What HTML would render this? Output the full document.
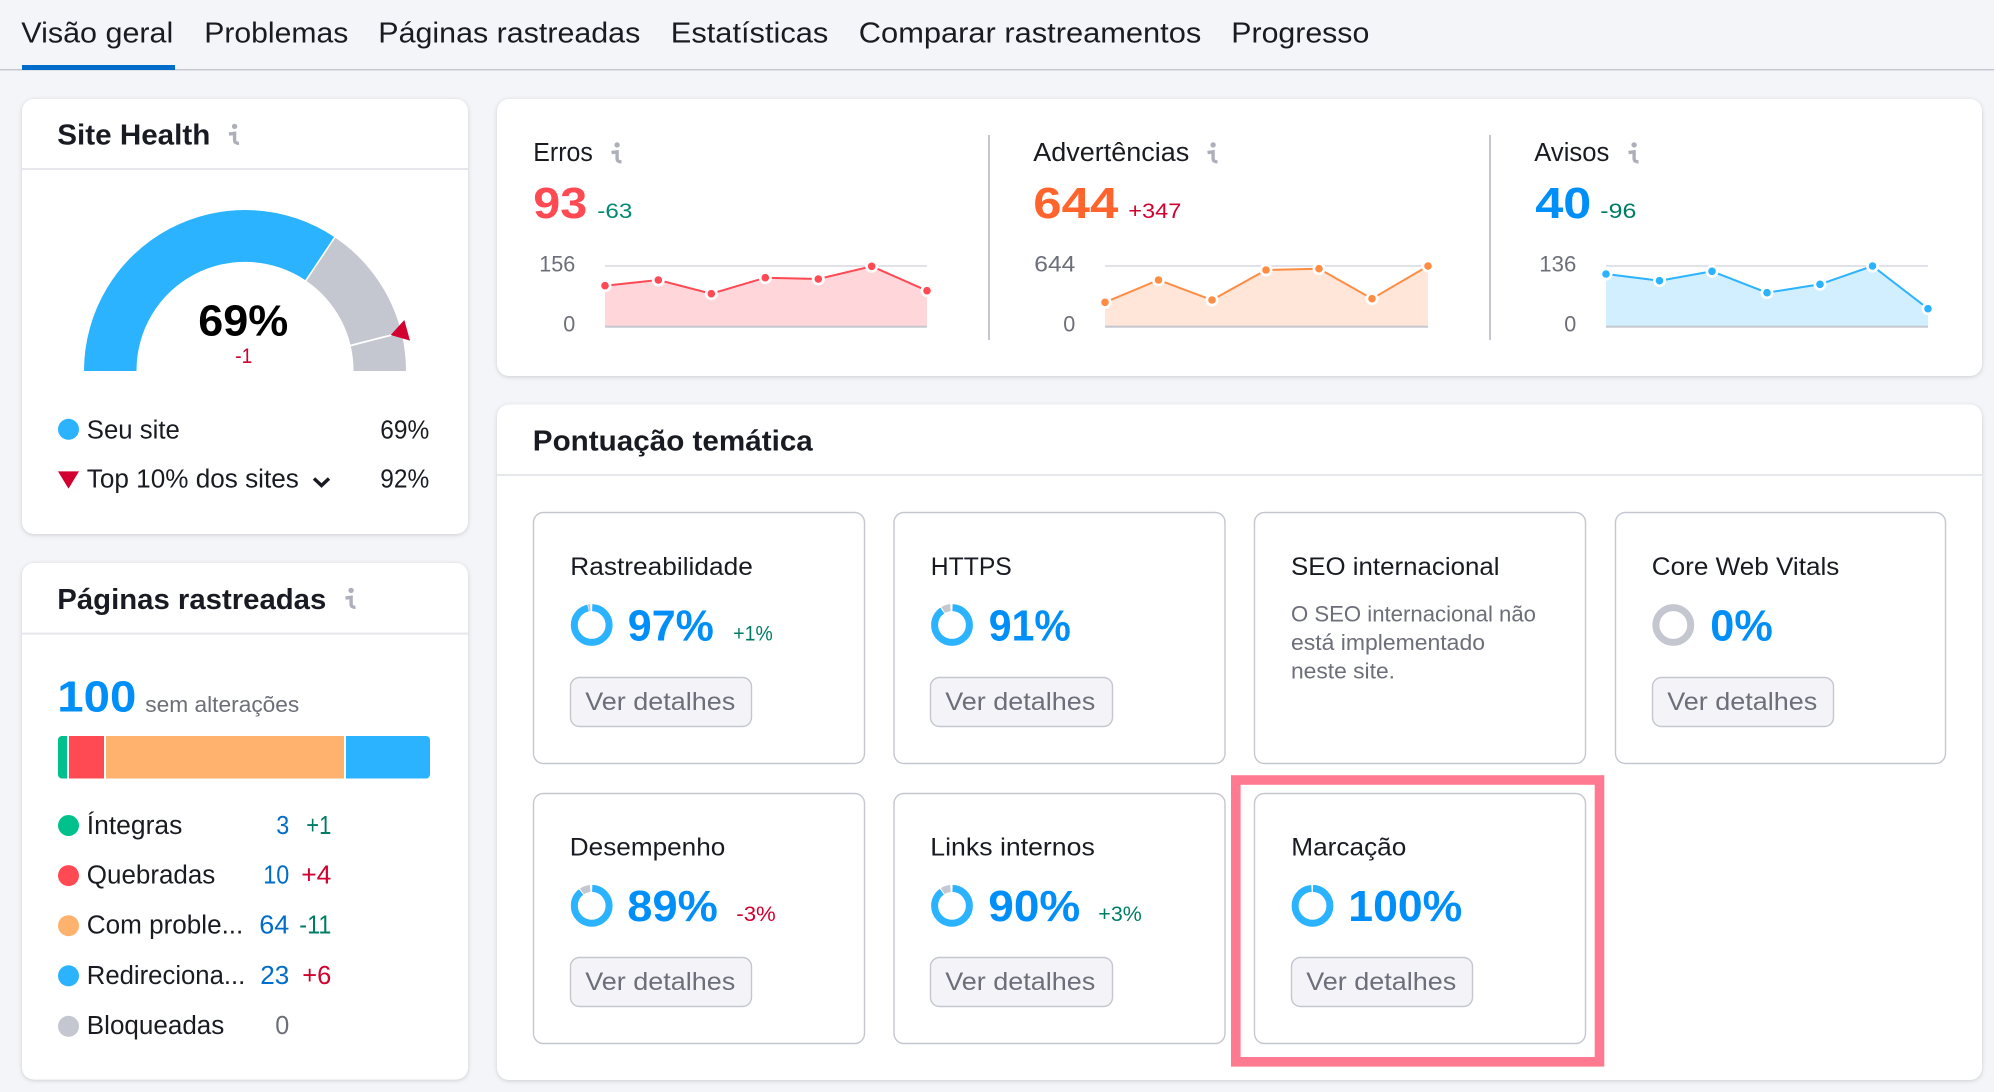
<!DOCTYPE html>
<html lang="pt">
<head>
<meta charset="utf-8">
<title>Visão geral</title>
<style>
html,body{margin:0;padding:0;background:#f4f5f9;width:1994px;height:1092px;overflow:hidden}
svg{display:block;position:absolute;left:0;top:0}
text{font-family:"Liberation Sans",sans-serif;fill:#191b23;white-space:pre;transform:translateX(-.7px)}
.tab{font-size:28.5px}
.h{font-size:29px;font-weight:700}
.b{font-size:25.5px}
.t{font-size:25px}
.g{font-size:22.5px;fill:#6c6e79}
.d{font-size:21.5px}
.big{font-size:44px;font-weight:700}
.bl{fill:#008ff8}
.up{fill:#d1002f}
.dn{fill:#007c65}
.nm{font-size:25.5px;fill:#006dca}
.btn{font-size:25px;fill:#6c6e79}
.card{fill:#fff;filter:drop-shadow(0 1px 2px rgba(25,27,35,.18))}
.in{fill:#fff;stroke:#c4c7cf;stroke-width:1.4}
.bt{fill:#f4f4f8;stroke:#c4c7cf;stroke-width:1.4}
.ln{fill:#e6e7ed}
.ic circle{fill:#adb0bb}
.ic path{fill:none;stroke:#adb0bb;stroke-width:3.4}
</style>
</head>
<body>
<svg width="1994" height="1092" viewBox="0 0 1994 1092" xmlns="http://www.w3.org/2000/svg">
<!-- tabs -->
<rect x="0" y="69" width="1994" height="1.4" fill="#c4c7cf"/>
<rect x="22" y="65" width="153" height="5" fill="#006dca"/>
<text class="tab" x="22" y="42.5" lengthAdjust="spacingAndGlyphs" textLength="152">Visão geral</text>
<text class="tab" x="205" y="42.5" lengthAdjust="spacingAndGlyphs" textLength="144">Problemas</text>
<text class="tab" x="379" y="42.5" lengthAdjust="spacingAndGlyphs" textLength="262">Páginas rastreadas</text>
<text class="tab" x="671.5" y="42.5" lengthAdjust="spacingAndGlyphs" textLength="157.5">Estatísticas</text>
<text class="tab" x="859.5" y="42.5" lengthAdjust="spacingAndGlyphs" textLength="342.5">Comparar rastreamentos</text>
<text class="tab" x="1232" y="42.5" lengthAdjust="spacingAndGlyphs" textLength="138">Progresso</text>

<!-- Site Health card -->
<rect class="card" x="22" y="99" width="446" height="435" rx="12"/>
<rect class="ln" x="22" y="168" width="446" height="2"/>
<text class="h" x="58" y="144.5" lengthAdjust="spacingAndGlyphs" textLength="153">Site Health</text>
<g class="ic" transform="translate(228 123.5)"><circle cx="6.6" cy="2.9" r="2.7"/><path d="M1 10.6L6.6 9.8V16.5Q6.6 20 11 19.8"/></g>
<path d="M84 371A161 161 0 0 1 335 237.5L306 280.6A108.5 108.5 0 0 0 136.5 371Z" fill="#2bb3ff"/>
<path d="M335 237.5A161 161 0 0 1 406 371H353.5A108.5 108.5 0 0 0 306 280.6Z" fill="#c4c7cf"/>
<path d="M335 237L305.6 281" stroke="#fff" stroke-width="1.6"/>
<path d="M350.7 345.5L391.7 335" stroke="#fff" stroke-width="1.8"/>
<path d="M390.7 335L404.3 320L410 340.6Z" fill="#d1002f"/>
<text x="199" y="335.5" font-size="44" font-weight="700" style="fill:#000" lengthAdjust="spacingAndGlyphs" textLength="90">69%</text>
<text class="d up" x="236" y="363" lengthAdjust="spacingAndGlyphs" textLength="17">-1</text>
<circle cx="68.5" cy="429.3" r="10.5" fill="#2bb3ff"/>
<text class="b" x="87.5" y="438.4" lengthAdjust="spacingAndGlyphs" textLength="93">Seu site</text>
<text class="b" x="381" y="438.4" lengthAdjust="spacingAndGlyphs" textLength="49">69%</text>
<path d="M58 471.4H79L68.5 488.6Z" fill="#d1002f"/>
<text class="b" x="87.5" y="487.5" lengthAdjust="spacingAndGlyphs" textLength="212">Top 10% dos sites</text>
<path d="M314 478.5L321.5 485.5L329 478.5" fill="none" stroke="#191b23" stroke-width="3.4"/>
<text class="b" x="381" y="487.5" lengthAdjust="spacingAndGlyphs" textLength="49">92%</text>

<!-- Páginas rastreadas card -->
<rect class="card" x="22" y="563" width="446" height="516.6" rx="12"/>
<rect class="ln" x="22" y="632.6" width="446" height="2"/>
<text class="h" x="58" y="609" lengthAdjust="spacingAndGlyphs" textLength="269">Páginas rastreadas</text>
<g class="ic" transform="translate(344.5 587.5)"><circle cx="6.6" cy="2.9" r="2.7"/><path d="M1 10.6L6.6 9.8V16.5Q6.6 20 11 19.8"/></g>
<text class="big bl" x="58" y="711.3" lengthAdjust="spacingAndGlyphs" textLength="79">100</text>
<text class="g" x="146" y="712" lengthAdjust="spacingAndGlyphs" textLength="154">sem alterações</text>
<path d="M62 736H67V778.5H62A4 4 0 0 1 58 774.5V740A4 4 0 0 1 62 736Z" fill="#00c08b"/>
<rect x="69" y="736" width="35" height="42.5" fill="#ff4953"/>
<rect x="106" y="736" width="238" height="42.5" fill="#ffb26e"/>
<path d="M346 736H426A4 4 0 0 1 430 740V774.5A4 4 0 0 1 426 778.5H346Z" fill="#2bb3ff"/>

<circle cx="68.5" cy="825.5" r="10.5" fill="#00c08b"/>
<text class="b" x="87.5" y="834" lengthAdjust="spacingAndGlyphs" textLength="95.5">Íntegras</text>
<text class="nm" x="277" y="834" lengthAdjust="spacingAndGlyphs" textLength="13">3</text>
<text class="b dn" x="307" y="834" lengthAdjust="spacingAndGlyphs" textLength="25">+1</text>
<circle cx="68.5" cy="875.6" r="10.5" fill="#ff4953"/>
<text class="b" x="87.5" y="883.6" lengthAdjust="spacingAndGlyphs" textLength="128.5">Quebradas</text>
<text class="nm" x="264" y="883.6" lengthAdjust="spacingAndGlyphs" textLength="26">10</text>
<text class="b up" x="302" y="883.6" lengthAdjust="spacingAndGlyphs" textLength="30">+4</text>
<circle cx="68.5" cy="925.7" r="10.5" fill="#ffb26e"/>
<text class="b" x="87.5" y="933.7" lengthAdjust="spacingAndGlyphs" textLength="156.5">Com proble...</text>
<text class="nm" x="260" y="933.7" lengthAdjust="spacingAndGlyphs" textLength="30">64</text>
<text class="b dn" x="300" y="933.7" lengthAdjust="spacingAndGlyphs" textLength="32">-11</text>
<circle cx="68.5" cy="975.8" r="10.5" fill="#2bb3ff"/>
<text class="b" x="87.5" y="983.8" lengthAdjust="spacingAndGlyphs" textLength="158.5">Redireciona...</text>
<text class="nm" x="261" y="983.8" lengthAdjust="spacingAndGlyphs" textLength="29">23</text>
<text class="b up" x="303" y="983.8" lengthAdjust="spacingAndGlyphs" textLength="29">+6</text>
<circle cx="68.5" cy="1026.3" r="10.5" fill="#c4c7cf"/>
<text class="b" x="87.5" y="1034" lengthAdjust="spacingAndGlyphs" textLength="137.5">Bloqueadas</text>
<text class="b" x="276" y="1034" style="fill:#6c6e79" lengthAdjust="spacingAndGlyphs" textLength="14">0</text>

<!-- Top stats card -->
<rect class="card" x="497" y="99" width="1485" height="277" rx="12"/>
<rect x="988" y="135" width="2" height="205" fill="#c4c7cf"/>
<rect x="1489" y="135" width="2" height="205" fill="#c4c7cf"/>

<text class="b" x="534" y="161" lengthAdjust="spacingAndGlyphs" textLength="59.5">Erros</text>
<g class="ic" transform="translate(610.5 142)"><circle cx="6.6" cy="2.9" r="2.7"/><path d="M1 10.6L6.6 9.8V16.5Q6.6 20 11 19.8"/></g>
<text class="big" x="534" y="218" style="fill:#ff4953" lengthAdjust="spacingAndGlyphs" textLength="54">93</text>
<text class="d" x="598" y="218" style="fill:#008a72" lengthAdjust="spacingAndGlyphs" textLength="35">-63</text>
<text class="g" x="540" y="271.7" lengthAdjust="spacingAndGlyphs" textLength="36">156</text>
<text class="g" x="564" y="331.6" lengthAdjust="spacingAndGlyphs" textLength="12">0</text>
<rect x="605" y="265" width="322" height="2" fill="#e0e1e9"/>
<path d="M605 285.7L658.3 280L711.3 293.7L765.3 277.7L818.3 279L871.7 266.3L927 290.7V326.7H605Z" fill="#ffd7da"/>
<rect x="605" y="325.7" width="322" height="2" fill="#c4c7cf"/>
<path d="M605 285.7L658.3 280L711.3 293.7L765.3 277.7L818.3 279L871.7 266.3L927 290.7" fill="none" stroke="#ff4953" stroke-width="2"/>
<g fill="#fff"><circle cx="605" cy="285.7" r="6.5"/><circle cx="658.3" cy="280" r="6.5"/><circle cx="711.3" cy="293.7" r="6.5"/><circle cx="765.3" cy="277.7" r="6.5"/><circle cx="818.3" cy="279" r="6.5"/><circle cx="871.7" cy="266.3" r="6.5"/><circle cx="927" cy="290.7" r="6.5"/></g>
<g fill="#ff4953"><circle cx="605" cy="285.7" r="3.8"/><circle cx="658.3" cy="280" r="3.8"/><circle cx="711.3" cy="293.7" r="3.8"/><circle cx="765.3" cy="277.7" r="3.8"/><circle cx="818.3" cy="279" r="3.8"/><circle cx="871.7" cy="266.3" r="3.8"/><circle cx="927" cy="290.7" r="3.8"/></g>

<text class="b" x="1034" y="161" lengthAdjust="spacingAndGlyphs" textLength="156">Advertências</text>
<g class="ic" transform="translate(1206.5 142)"><circle cx="6.6" cy="2.9" r="2.7"/><path d="M1 10.6L6.6 9.8V16.5Q6.6 20 11 19.8"/></g>
<text class="big" x="1034" y="218" style="fill:#ff642d" lengthAdjust="spacingAndGlyphs" textLength="85">644</text>
<text class="d up" x="1129" y="218" lengthAdjust="spacingAndGlyphs" textLength="53">+347</text>
<text class="g" x="1035" y="271.7" lengthAdjust="spacingAndGlyphs" textLength="41">644</text>
<text class="g" x="1064" y="331.6" lengthAdjust="spacingAndGlyphs" textLength="12">0</text>
<rect x="1105" y="265" width="323" height="2" fill="#e0e1e9"/>
<path d="M1105 302.3L1158.5 280L1212 300L1266 270L1319 268.7L1372 298.7L1428 266V326.7H1105Z" fill="#ffe6d8"/>
<rect x="1105" y="325.7" width="323" height="2" fill="#c4c7cf"/>
<path d="M1105 302.3L1158.5 280L1212 300L1266 270L1319 268.7L1372 298.7L1428 266" fill="none" stroke="#ff8c43" stroke-width="2"/>
<g fill="#fff"><circle cx="1105" cy="302.3" r="6.5"/><circle cx="1158.5" cy="280" r="6.5"/><circle cx="1212" cy="300" r="6.5"/><circle cx="1266" cy="270" r="6.5"/><circle cx="1319" cy="268.7" r="6.5"/><circle cx="1372" cy="298.7" r="6.5"/><circle cx="1428" cy="266" r="6.5"/></g>
<g fill="#ff8c43"><circle cx="1105" cy="302.3" r="3.8"/><circle cx="1158.5" cy="280" r="3.8"/><circle cx="1212" cy="300" r="3.8"/><circle cx="1266" cy="270" r="3.8"/><circle cx="1319" cy="268.7" r="3.8"/><circle cx="1372" cy="298.7" r="3.8"/><circle cx="1428" cy="266" r="3.8"/></g>

<text class="b" x="1535" y="161" lengthAdjust="spacingAndGlyphs" textLength="75">Avisos</text>
<g class="ic" transform="translate(1627.5 142)"><circle cx="6.6" cy="2.9" r="2.7"/><path d="M1 10.6L6.6 9.8V16.5Q6.6 20 11 19.8"/></g>
<text class="big bl" x="1536" y="218" lengthAdjust="spacingAndGlyphs" textLength="56">40</text>
<text class="d dn" x="1601" y="218" lengthAdjust="spacingAndGlyphs" textLength="36">-96</text>
<text class="g" x="1540" y="271.7" lengthAdjust="spacingAndGlyphs" textLength="37">136</text>
<text class="g" x="1565" y="331.6" lengthAdjust="spacingAndGlyphs" textLength="12">0</text>
<rect x="1606" y="265" width="322" height="2" fill="#e0e1e9"/>
<path d="M1606 274L1659.5 280.7L1712 271.3L1767 292.7L1820 284.3L1872.5 266L1928 308.7V326.7H1606Z" fill="#d2efff"/>
<rect x="1606" y="325.7" width="322" height="2" fill="#c4c7cf"/>
<path d="M1606 274L1659.5 280.7L1712 271.3L1767 292.7L1820 284.3L1872.5 266L1928 308.7" fill="none" stroke="#2bb3ff" stroke-width="2"/>
<g fill="#fff"><circle cx="1606" cy="274" r="6.5"/><circle cx="1659.5" cy="280.7" r="6.5"/><circle cx="1712" cy="271.3" r="6.5"/><circle cx="1767" cy="292.7" r="6.5"/><circle cx="1820" cy="284.3" r="6.5"/><circle cx="1872.5" cy="266" r="6.5"/><circle cx="1928" cy="308.7" r="6.5"/></g>
<g fill="#2bb3ff"><circle cx="1606" cy="274" r="3.8"/><circle cx="1659.5" cy="280.7" r="3.8"/><circle cx="1712" cy="271.3" r="3.8"/><circle cx="1767" cy="292.7" r="3.8"/><circle cx="1820" cy="284.3" r="3.8"/><circle cx="1872.5" cy="266" r="3.8"/><circle cx="1928" cy="308.7" r="3.8"/></g>

<!-- Pontuação temática card -->
<rect class="card" x="497" y="404.5" width="1485" height="675.5" rx="12"/>
<rect class="ln" x="497" y="474" width="1485" height="2"/>
<text class="h" x="533.5" y="450.5" lengthAdjust="spacingAndGlyphs" textLength="280">Pontuação temática</text>

<!-- row 1 -->
<rect class="in" x="533.5" y="512.5" width="331" height="251" rx="10"/>
<text class="t" x="571" y="575" lengthAdjust="spacingAndGlyphs" textLength="182.5">Rastreabilidade</text>
<g transform="rotate(-90 591.7 625)" fill="none" stroke-width="7">
<circle cx="591.7" cy="625" r="17.4" pathLength="100" stroke="#c4c7cf" stroke-dasharray="1.6 100" stroke-dashoffset="-97.6"/>
<circle cx="591.7" cy="625" r="17.4" pathLength="100" stroke="#2bb3ff" stroke-dasharray="96.6 100" stroke-dashoffset="-0.5"/>
</g>
<text class="big bl" x="628.5" y="640.7" lengthAdjust="spacingAndGlyphs" textLength="86">97%</text>
<text class="d dn" x="734" y="640.7" lengthAdjust="spacingAndGlyphs" textLength="39.5">+1%</text>
<rect class="bt" x="570.5" y="677.5" width="181" height="49" rx="9"/>
<text class="btn" x="586" y="710" lengthAdjust="spacingAndGlyphs" textLength="150">Ver detalhes</text>

<rect class="in" x="894" y="512.5" width="331" height="251" rx="10"/>
<text class="t" x="931.5" y="575" lengthAdjust="spacingAndGlyphs" textLength="81">HTTPS</text>
<g transform="rotate(-90 952 625)" fill="none" stroke-width="7">
<circle cx="952" cy="625" r="17.4" pathLength="100" stroke="#c4c7cf" stroke-dasharray="7 100" stroke-dashoffset="-92"/>
<circle cx="952" cy="625" r="17.4" pathLength="100" stroke="#2bb3ff" stroke-dasharray="90.5 100" stroke-dashoffset="-0.5"/>
</g>
<text class="big bl" x="989.5" y="640.7" lengthAdjust="spacingAndGlyphs" textLength="82">91%</text>
<rect class="bt" x="930.5" y="677.5" width="182" height="49" rx="9"/>
<text class="btn" x="946" y="710" lengthAdjust="spacingAndGlyphs" textLength="150">Ver detalhes</text>

<rect class="in" x="1254.5" y="512.5" width="331" height="251" rx="10"/>
<text class="t" x="1291.7" y="575" lengthAdjust="spacingAndGlyphs" textLength="208.5">SEO internacional</text>
<text class="g" x="1291.7" y="621.7" lengthAdjust="spacingAndGlyphs" textLength="245">O SEO internacional não</text>
<text class="g" x="1291.7" y="650" lengthAdjust="spacingAndGlyphs" textLength="194">está implementado</text>
<text class="g" x="1291.7" y="678.3" lengthAdjust="spacingAndGlyphs" textLength="104">neste site.</text>

<rect class="in" x="1615.5" y="512.5" width="330" height="251" rx="10"/>
<text class="t" x="1652.5" y="575" lengthAdjust="spacingAndGlyphs" textLength="187.5">Core Web Vitals</text>
<circle cx="1673.3" cy="625" r="17.4" fill="none" stroke="#c4c7cf" stroke-width="7"/>
<text class="big bl" x="1711" y="640.7" lengthAdjust="spacingAndGlyphs" textLength="62.5">0%</text>
<rect class="bt" x="1652.5" y="677.5" width="181" height="49" rx="9"/>
<text class="btn" x="1668" y="710" lengthAdjust="spacingAndGlyphs" textLength="150">Ver detalhes</text>

<!-- row 2 -->
<rect class="in" x="533.5" y="793.5" width="331" height="250" rx="10"/>
<text class="t" x="570.5" y="855.5" lengthAdjust="spacingAndGlyphs" textLength="155.5">Desempenho</text>
<g transform="rotate(-90 591.7 905.8)" fill="none" stroke-width="7">
<circle cx="591.7" cy="905.8" r="17.4" pathLength="100" stroke="#c4c7cf" stroke-dasharray="8 100" stroke-dashoffset="-91"/>
<circle cx="591.7" cy="905.8" r="17.4" pathLength="100" stroke="#2bb3ff" stroke-dasharray="89.5 100" stroke-dashoffset="-0.5"/>
</g>
<text class="big bl" x="628" y="921" lengthAdjust="spacingAndGlyphs" textLength="90.5">89%</text>
<text class="d up" x="737" y="921" lengthAdjust="spacingAndGlyphs" textLength="39.5">-3%</text>
<rect class="bt" x="570.5" y="957.5" width="181" height="49" rx="9"/>
<text class="btn" x="586" y="990" lengthAdjust="spacingAndGlyphs" textLength="150">Ver detalhes</text>

<rect class="in" x="894" y="793.5" width="331" height="250" rx="10"/>
<text class="t" x="931" y="855.5" lengthAdjust="spacingAndGlyphs" textLength="164.5">Links internos</text>
<g transform="rotate(-90 952 905.8)" fill="none" stroke-width="7">
<circle cx="952" cy="905.8" r="17.4" pathLength="100" stroke="#c4c7cf" stroke-dasharray="7.5 100" stroke-dashoffset="-91.5"/>
<circle cx="952" cy="905.8" r="17.4" pathLength="100" stroke="#2bb3ff" stroke-dasharray="90 100" stroke-dashoffset="-0.5"/>
</g>
<text class="big bl" x="989" y="921" lengthAdjust="spacingAndGlyphs" textLength="92">90%</text>
<text class="d dn" x="1099" y="921" lengthAdjust="spacingAndGlyphs" textLength="43.5">+3%</text>
<rect class="bt" x="930.5" y="957.5" width="182" height="49" rx="9"/>
<text class="btn" x="946" y="990" lengthAdjust="spacingAndGlyphs" textLength="150">Ver detalhes</text>

<rect class="in" x="1254.5" y="793.5" width="331" height="250" rx="10"/>
<text class="t" x="1292" y="855.5" lengthAdjust="spacingAndGlyphs" textLength="115">Marcação</text>
<g transform="rotate(-90 1312.5 905.8)" fill="none" stroke-width="7">
<circle cx="1312.5" cy="905.8" r="17.4" pathLength="100" stroke="#2bb3ff" stroke-dasharray="99 100" stroke-dashoffset="-0.5"/>
</g>
<text class="big bl" x="1349" y="921" lengthAdjust="spacingAndGlyphs" textLength="114">100%</text>
<rect class="bt" x="1291.5" y="957.5" width="181" height="49" rx="9"/>
<text class="btn" x="1307" y="990" lengthAdjust="spacingAndGlyphs" textLength="150">Ver detalhes</text>

<!-- highlight -->
<rect x="1235.8" y="780" width="363.7" height="281.8" fill="none" stroke="#ff7a90" stroke-width="9.6"/>
</svg>
</body>
</html>
